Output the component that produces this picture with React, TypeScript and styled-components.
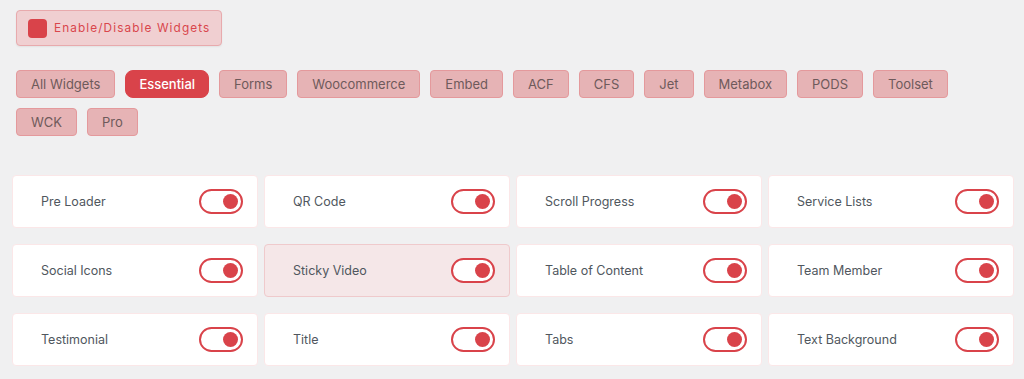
import styled, { createGlobalStyle } from "styled-components";

const GlobalStyle = createGlobalStyle`
  body {
    margin: 0;
    background: #f0f0f1;
    font-family: Inter, "Noto Sans", sans-serif;
  }
`;

const Page = styled.div`
  padding: 10px 16px 0 16px;
  display: flex;
  flex-direction: column;
`;

const ToggleAll = styled.button`
  align-self: flex-start;
  display: flex;
  align-items: center;
  gap: 7px;
  height: 36px;
  padding: 0 11px;
  background: #f0cfd1;
  border: 1px solid #e8aaad;
  border-radius: 4px;
  color: #d9464c;
  font-family: Inter, "Noto Sans", sans-serif;
  font-size: 11.8px;
  letter-spacing: 1.1px;
  white-space: nowrap;
  box-shadow: 0 1px 2px rgba(0, 0, 0, 0.06);
  cursor: pointer;
`;

const Square = styled.span`
  width: 19px;
  height: 19px;
  border-radius: 4px;
  background: #d9434a;
`;

const Tabs = styled.div`
  display: flex;
  flex-wrap: wrap;
  gap: 10px;
  margin-top: 24px;
`;

const Tab = styled.button<{ $active?: boolean }>`
  height: 28px;
  padding: 0 ${(p) => (p.$active ? "13px" : "14px")};
  border-radius: ${(p) => (p.$active ? "8px" : "4px")};
  border: 1px solid ${(p) => (p.$active ? "#d9434a" : "#e4999c")};
  background: ${(p) => (p.$active ? "#d9434a" : "#e6b3b5")};
  color: ${(p) => (p.$active ? "#ffffff" : "#6e5a5b")};
  font-family: Inter, "Noto Sans", sans-serif;
  font-size: 13px;
  font-weight: ${(p) => (p.$active ? 500 : 400)};
  cursor: pointer;
`;

const Grid = styled.div`
  display: grid;
  grid-template-columns: repeat(4, 246px);
  column-gap: 6px;
  row-gap: 16px;
  margin: 39px 0 0 -4px;
`;

const Card = styled.div<{ $hover?: boolean }>`
  height: 53px;
  box-sizing: border-box;
  display: flex;
  align-items: center;
  justify-content: space-between;
  padding: 0 14px 0 28px;
  background: ${(p) => (p.$hover ? "#f5e7e8" : "#ffffff")};
  border: 1px solid ${(p) => (p.$hover ? "#efcacc" : "#fbe7e8")};
  border-radius: 4px;
`;

const Label = styled.span`
  font-size: 12.5px;
  color: #50575e;
`;

const Switch = styled.span`
  width: 44px;
  height: 25px;
  box-sizing: border-box;
  border: 2px solid #d9434a;
  border-radius: 13px;
  display: flex;
  align-items: center;
  justify-content: flex-end;
  padding-right: 3px;
  background: #ffffff;
`;

const Knob = styled.span`
  width: 15px;
  height: 15px;
  border-radius: 50%;
  background: #d9434a;
`;

const tabs = [
  "All Widgets",
  "Essential",
  "Forms",
  "Woocommerce",
  "Embed",
  "ACF",
  "CFS",
  "Jet",
  "Metabox",
  "PODS",
  "Toolset",
  "WCK",
  "Pro",
];

const widgets = [
  "Pre Loader",
  "QR Code",
  "Scroll Progress",
  "Service Lists",
  "Social Icons",
  "Sticky Video",
  "Table of Content",
  "Team Member",
  "Testimonial",
  "Title",
  "Tabs",
  "Text Background",
];

function App() {
  return (
    <Page>
      <GlobalStyle />
      <ToggleAll>
        <Square />
        Enable/Disable Widgets
      </ToggleAll>
      <Tabs>
        {tabs.map((t) => (
          <Tab key={t} $active={t === "Essential"}>
            {t}
          </Tab>
        ))}
      </Tabs>
      <Grid>
        {widgets.map((w) => (
          <Card key={w} $hover={w === "Sticky Video"}>
            <Label>{w}</Label>
            <Switch>
              <Knob />
            </Switch>
          </Card>
        ))}
      </Grid>
    </Page>
  );
}

export default App;
